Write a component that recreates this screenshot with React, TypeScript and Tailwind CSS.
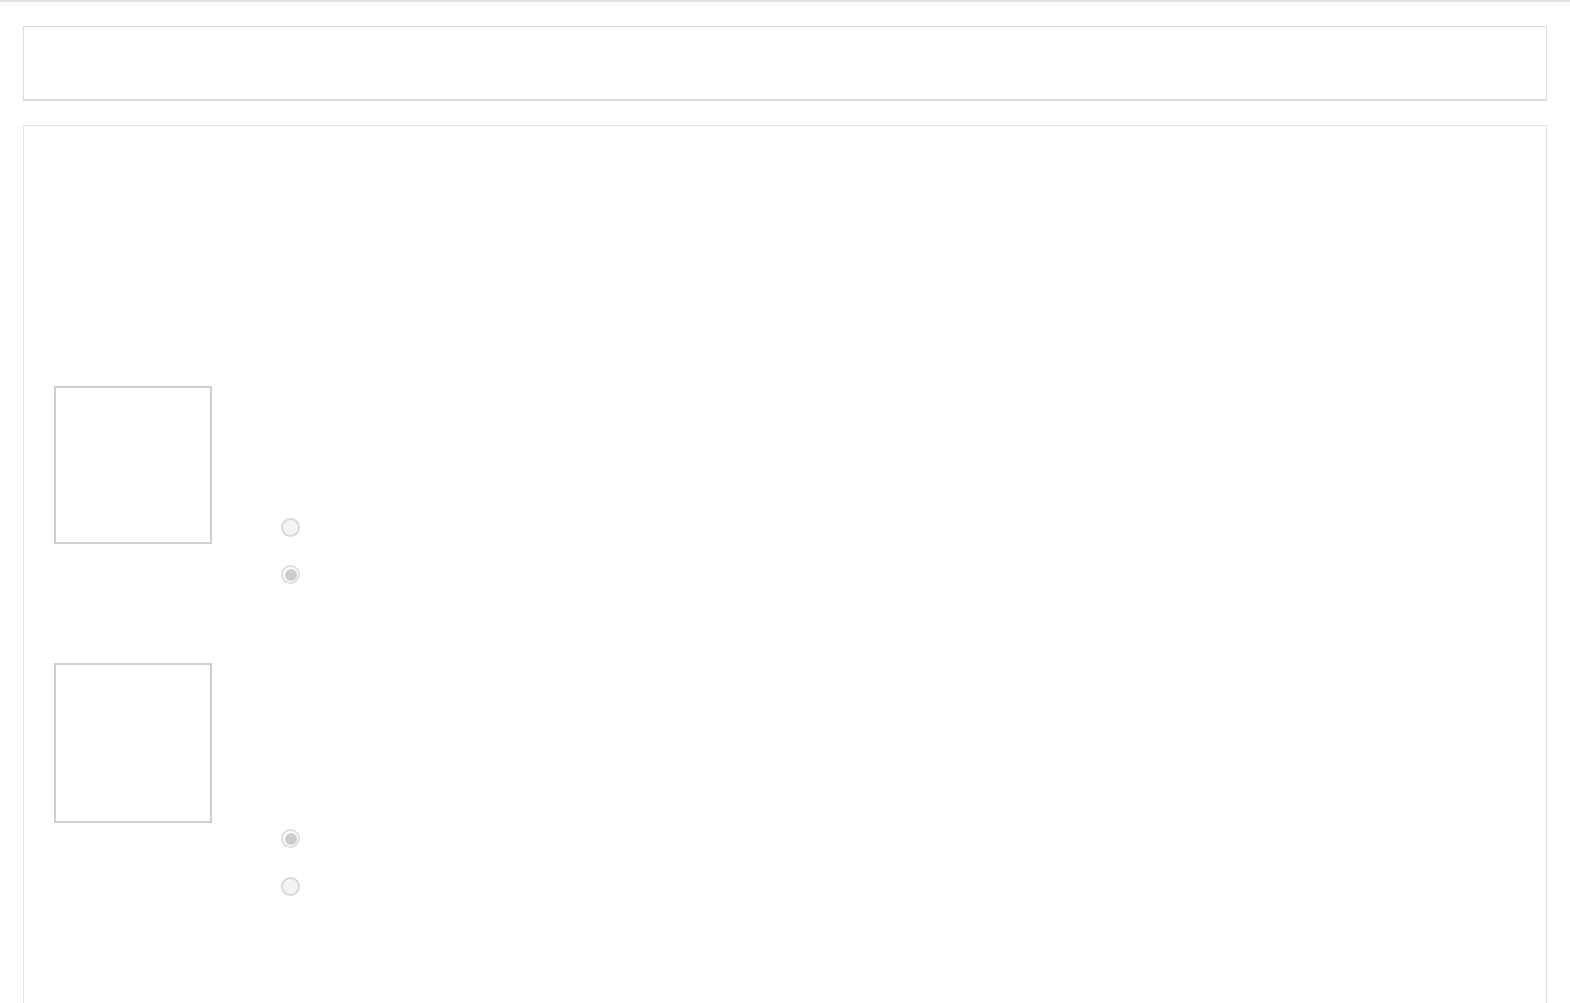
import React from 'react';

function Radio({ checked }: { checked?: boolean }) {
  return (
    <div
      className={`w-[19px] h-[19px] rounded-full border-2 flex items-center justify-center ${
        checked ? 'border-[#dedede] bg-white' : 'border-[#d9d9d9] bg-[#f4f4f4]'
      }`}
    >
      {checked && <div className="w-[12px] h-[12px] rounded-full bg-[#cdcdcd]" />}
    </div>
  );
}

function Row({ top, gap, size, first, className }: { top: string; gap: string; size: string; first: boolean; className?: string }) {
  return (
    <div className={`flex ${className ?? ''}`}>
      <div className={`w-[158px] ${size} border-2 border-[#cbd0d8] bg-white shrink-0`} />
      <div className={`ml-[69px] flex flex-col ${gap} ${top}`}>
        <Radio checked={!first} />
        <Radio checked={first} />
      </div>
    </div>
  );
}

export default function App() {
  return (
    <main className="min-h-screen bg-white border-t-2 border-[#e4e2e2] font-['Liberation_Sans',sans-serif]">
      <div className="px-[23px] pt-[24px]">
        {/* header bar */}
        <div className="h-[75px] border border-[#dcdcdc] border-b-2 bg-white" />

        {/* main panel */}
        <div className="mt-[24px] h-[900px] border border-[#e2e2e2] bg-white pt-[260px] pl-[30px]">
          <Row first top="pt-[132px]" gap="gap-[28px]" size="h-[158px]" />
          <Row first={false} top="pt-[166px]" gap="gap-[29px]" size="h-[160px]" className="mt-[79px]" />
        </div>
      </div>
    </main>
  );
}
